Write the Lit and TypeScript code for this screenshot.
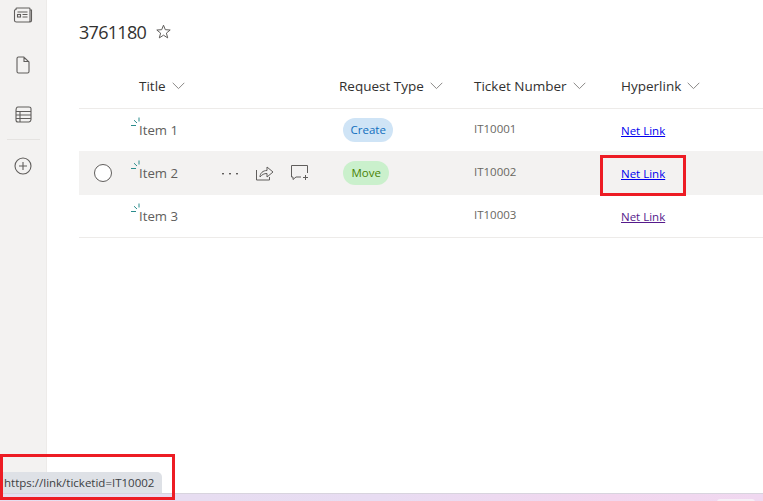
import { LitElement, html, css } from "lit";
import { customElement } from "lit/decorators.js";

const chevron = html`<svg class="chev" width="13" height="8" viewBox="0 0 13 8"><path d="M.7.8 6.500 6.600 12.300.8" fill="none" stroke="#8a8886" stroke-width="1"/></svg>`;

const spark = html`<svg class="spark" width="10" height="10" viewBox="0 0 10 10"><path d="M0 8.500h5M3 3.200 6 6M8 .5v4" fill="none" stroke="#2b8c8c" stroke-width="1"/></svg>`;

@customElement("app-root")
export class AppRoot extends LitElement {
  static styles = css`
    :host { display: flex; flex-direction: column; width: 763px; height: 501px; position: relative; overflow: hidden; background: #fff; font-family: "Open Sans", "Noto Sans", sans-serif; color: #323130; }
    .body { flex: 1; display: flex; min-height: 0; }
    .side { width: 46px; flex: none; background: #f3f2f1; border-right: 1px solid #edebe9; display: flex; flex-direction: column; align-items: center; color: #605e5c; padding-top: 7px; box-sizing: content-box; }
    .side svg { display: block; }
    .side .i1 { margin-bottom: 33px; }
    .side .i2 { margin-bottom: 32px; }
    .side .i3 { margin-bottom: 16px; }
    .sep { width: 33px; height: 1px; background: #e5e3e1; margin-bottom: 17px; }
    .main { flex: 1; padding-left: 32px; min-width: 0; }
    .head { display: flex; align-items: center; gap: 10px; height: 64px; font-size: 18px; color: #323130; letter-spacing: -0.7px; }
    .head svg { margin-top: -1px; }
    .row { display: grid; grid-template-columns: 60px 200px 135px 147px 1fr; height: 43px; box-sizing: border-box; align-items: center; border-bottom: 1px solid #edebe9; font-size: 13px; }
    .row.hdr { height: 45px; font-size: 13.5px; font-weight: 500; color: #323130; }
    .row.hdr > div { display: flex; align-items: center; gap: 6px; }
    .row.hover { background: #f3f2f1; border-bottom-color: #f3f2f1; box-shadow: 0 -1px 0 #f3f2f1; }
    .check { width: 18px; height: 18px; border-radius: 50%; border: 1px solid #605e5c; background: #fff; box-sizing: border-box; margin-left: 15px; }
    .title { display: flex; align-items: center; color: #605e5c; position: relative; font-size: 13.2px; }
    .spark { position: absolute; left: -8px; top: -4px; }
    .name { width: 82px; }
    .acts { display: flex; align-items: center; gap: 17px; color: #605e5c; }
    .acts svg { display: block; }
    .pill { display: inline-block; height: 24px; line-height: 23px; border-radius: 12px; font-size: 11.5px; margin-left: 4px; }
    .create { background: #cfe4f6; color: #106ebe; padding: 0 7.5px; }
    .move { background: #caf0cc; color: #498205; padding: 0 8.5px; }
    .tick { font-size: 11.5px; color: #69675f; margin-top: -3px; }
    a { font-size: 11.5px; color: #0000ee; }
    a.seen { color: #551a8b; }
    .mark { position: absolute; border: 3px solid #ed1c24; box-sizing: border-box; pointer-events: none; }
    .mark.link { left: 600px; top: 155px; width: 86px; height: 41px; }
    .mark.status { left: 0; top: 454px; width: 175px; height: 46px; }
    .tip { position: absolute; left: 0; top: 472px; height: 21px; width: 162px; background: #dee1e6; border-top-right-radius: 5px; font-size: 11.5px; line-height: 21px; padding-left: 4px; box-sizing: border-box; color: #3c4043; white-space: nowrap; overflow: hidden; }
    .strip { height: 8px; flex: none; background: linear-gradient(90deg, #e6def0 0%, #e8dcf2 50%, #f2d6ee 80%, #f0d8f0 100%); position: relative; border-top: 1px solid #d8d4de; box-sizing: border-box; }
    .chip { position: absolute; left: 717px; top: 5px; width: 38px; height: 4px; background: #f6eef6; border-radius: 3px 3px 0 0; }
  `;

  private row(name: string, type: string, cls: string, tick: string, linkCls: string, hover = false) {
    return html`<div class="row ${hover ? "hover" : ""}">
      <div>${hover ? html`<div class="check"></div>` : ""}</div>
      <div class="title">${spark}<span class="name">${name}</span>
        ${hover ? html`<div class="acts">
          <svg width="18" height="16" viewBox="0 0 18 16"><g fill="#605e5c"><rect x="1" y="8" width="2" height="1.400"/><rect x="8" y="8" width="2" height="1.400"/><rect x="15" y="8" width="2" height="1.400"/></g></svg>
          <svg width="18" height="16" viewBox="0 0 18 16" fill="none" stroke="#605e5c"><path d="M.5 5v10h13v-3"/><path d="M4 12c0-4 3-6.500 7-6.500V2l6 5-6 5V8.500c-3 0-5 1-7 3.500z"/></svg>
          <svg width="18" height="16" viewBox="0 0 18 16" fill="none" stroke="#605e5c"><path d="M10 12H5l-3 2.500V12H.5V.5h16V8"/><path d="M12 12.500h5M14.500 10v5"/></svg>
        </div>` : ""}
      </div>
      <div>${type ? html`<span class="pill ${cls}">${type}</span>` : ""}</div>
      <div class="tick">${tick}</div>
      <div><a class="${linkCls}" href="#">Net Link</a></div>
    </div>`;
  }

  render() {
    return html`
      <div class="body">
        <nav class="side">
          <svg class="i1" width="20" height="16" viewBox="0 0 20 16" fill="none" stroke="#605e5c" stroke-width="1.100"><path d="M3 2.500V1.800Q3 1 4 1h12q1 0 1 .8V14q0 1-1 1H3.500Q1.500 15 1.500 13.500V3.500Q1.500 2.500 3 2.500zM17 3h1.500v10.500q0 1.500-1.500 1.500"/><rect x="4.500" y="7.500" width="3" height="2.500"/><path d="M4.500 5h10M9.500 7.500h5M9.500 10h5"/></svg>
          <svg class="i2" width="14" height="18" viewBox="0 0 14 18" fill="none" stroke="#605e5c" stroke-width="1.100"><path d="M1 2.500Q1 1 2.500 1h5.300L13 6v9.500Q13 17 11.500 17h-9Q1 17 1 15.500zM8 1v4.500h5"/></svg>
          <svg class="i3" width="17" height="17" viewBox="0 0 17 17" fill="none" stroke="#605e5c" stroke-width="1.100"><path d="M3 1h11q2 0 2 1.500v11q0 2-2 2.500H3q-2 0-2-2V5q0-4 2-4zM1 5.500h15M1 9h15M1 12.500h15M5 5.500V16"/></svg>
          <div class="sep"></div>
          <svg width="18" height="18" viewBox="0 0 18 18" fill="none" stroke="#605e5c" stroke-width="1.100"><circle cx="9" cy="9" r="8"/><path d="M9 5v8M5 9h8"/></svg>
        </nav>
        <main class="main">
          <div class="head"><span>3761180</span>
            <svg width="15" height="15" viewBox="0 0 15 15"><path d="M7.500 1.200 9.300 5.700l4.900.3-3.800 3.100 1.300 4.800-4.200-2.700-4.200 2.700 1.300-4.800L.8 6l4.900-.3z" fill="none" stroke="#605e5c"/></svg>
          </div>
          <div class="row hdr">
            <div></div>
            <div>Title ${chevron}</div>
            <div>Request Type ${chevron}</div>
            <div>Ticket Number ${chevron}</div>
            <div>Hyperlink ${chevron}</div>
          </div>
          ${this.row("Item 1", "Create", "create", "IT10001", "")}
          ${this.row("Item 2", "Move", "move", "IT10002", "", true)}
          ${this.row("Item 3", "", "", "IT10003", "seen")}
        </main>
      </div>
      <div class="strip"><div class="chip"></div></div>
      <div class="tip">https://link/ticketid=IT10002</div>
      <div class="mark status"></div>
      <div class="mark link"></div>
    `;
  }
}
